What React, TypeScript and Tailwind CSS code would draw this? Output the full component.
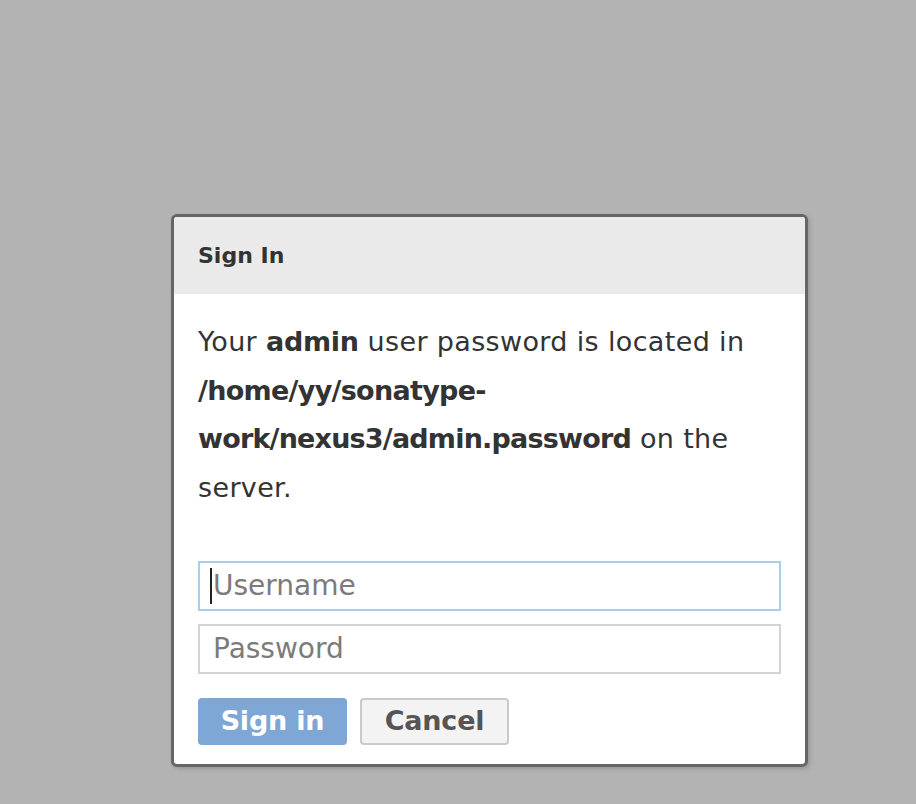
export default function App() {
  return (
    <div
      className="min-h-[804px] w-full bg-[#b3b3b3] pt-[214px] pl-[171px]"
      style={{ fontFamily: '"DejaVu Sans", "Open Sans", sans-serif' }}
    >
      {/* Sign in dialog */}
      <div className="w-[637px] rounded-[6px] border-[3px] border-[#666666] bg-white overflow-hidden shadow-[2px_2px_4px_rgba(0,0,0,0.15)]">
        <div className="h-[77px] bg-[#eaeaea] pl-[24px] flex items-center">
          <h1 className="text-[22px] font-bold text-[#333333]">Sign In</h1>
        </div>

        <div className="px-[24px] pt-[24px] pb-[19px]">
          <p className="text-[27px] leading-[48.7px] text-[#333333] tracking-[0.35px]">
            Your <b className="tracking-[-0.3px]">admin</b> user password is located in{' '}
            <b className="tracking-[-0.7px]">/home/yy/sonatype-</b>
            <b className="tracking-[-0.8px]">work/nexus3/admin.password</b> on the server.
          </p>

          <div className="mt-[48px] flex flex-col gap-[13px]">
            <div className="relative">
              <input
                placeholder="Username"
                className="w-[583px] h-[50px] border-2 border-[#a7cfec] px-[13px] text-[28px] text-[#333] placeholder:text-[#7b7b7b] outline-none"
              />
              <span className="absolute left-[12px] top-[7px] w-[2px] h-[36px] bg-[#222]" />
            </div>
            <input
              placeholder="Password"
              type="password"
              className="w-[583px] h-[50px] border-2 border-[#d4d4d4] px-[13px] text-[28px] text-[#333] placeholder:text-[#7b7b7b] outline-none"
            />
          </div>

          <div className="mt-[24px] flex gap-[13px]">
            <button className="w-[149px] h-[47px] rounded-[4px] bg-[#7fa7d5] text-white text-[27px] font-bold tracking-[-0.2px]">
              Sign in
            </button>
            <button className="w-[149px] h-[47px] rounded-[4px] border-2 border-[#cacaca] bg-[#f3f3f3] text-[#555555] text-[27px] font-bold tracking-[-0.2px]">
              Cancel
            </button>
          </div>
        </div>
      </div>
    </div>
  )
}
